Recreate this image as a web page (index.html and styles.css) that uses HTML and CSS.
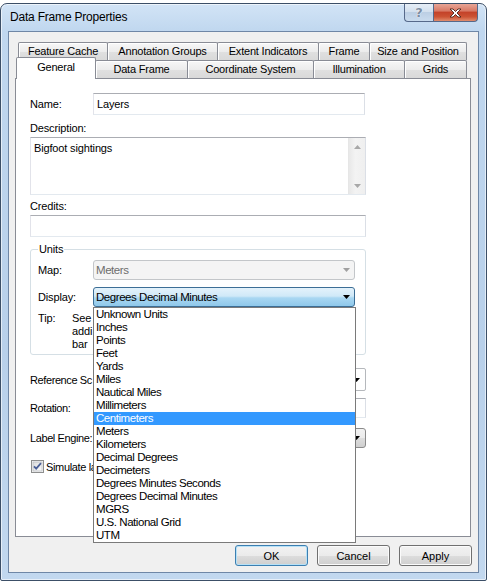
FILE: index.html
```html
<!DOCTYPE html>
<html>
<head>
<meta charset="utf-8">
<title>Data Frame Properties</title>
<link rel="stylesheet" href="styles.css">
</head>
<body>
<div class="window">
  <div class="titlebar">
    <span class="title">Data Frame Properties</span>
    <div class="caption-btns">
      <div class="cbtn help">?</div>
      <div class="cbtn close">
        <svg width="13" height="10" viewBox="0 -1 13 10"><path d="M1 0h3l2.5 2.5L9 0h3L8 4l4 4H9L6.5 5.5 4 8H1l4-4z" fill="#fff" stroke="#4a2418" stroke-width="0.9" stroke-linejoin="round"/></svg>
      </div>
    </div>
  </div>
  <div class="client">
    <div class="tabstrip">
      <div class="tabrow back">
        <div class="tab">Feature Cache</div>
        <div class="tab">Annotation Groups</div>
        <div class="tab">Extent Indicators</div>
        <div class="tab">Frame</div>
        <div class="tab">Size and Position</div>
      </div>
      <div class="tabrow front">
        <div class="tab sel">General</div>
        <div class="tab">Data Frame</div>
        <div class="tab">Coordinate System</div>
        <div class="tab">Illumination</div>
        <div class="tab">Grids</div>
      </div>
    </div>
    <div class="panel">
      <div class="form">
        <div class="row">
          <span class="lbl">Name:</span>
          <div class="textbox name-box">Layers</div>
        </div>
        <div class="plabel desc-label">Description:</div>
        <div class="textbox textarea">
          <div class="ta-text">Bigfoot sightings</div>
          <div class="vscroll">
            <div class="sbtn"><svg width="7" height="4" viewBox="0 0 7 4"><path d="M0 4L3.5 0 7 4z" fill="#a8a8a8"/></svg></div>
            <div class="sbtn"><svg width="7" height="4" viewBox="0 0 7 4"><path d="M0 0h7L3.5 4z" fill="#a8a8a8"/></svg></div>
          </div>
        </div>
        <div class="plabel credits-label">Credits:</div>
        <div class="textbox credits-box"></div>

        <fieldset class="group">
          <legend>Units</legend>
          <div class="frow">
            <span class="flbl">Map:</span>
            <div class="combo disabled">
              <span>Meters</span>
              <svg width="7" height="4" viewBox="0 0 7 4"><path d="M0 0h7L3.5 4z" fill="#a0a0a0"/></svg>
            </div>
          </div>
          <div class="frow display-row">
            <span class="flbl">Display:</span>
            <div class="combo-wrap">
              <div class="combo focused">
                <span>Degrees Decimal Minutes</span>
                <svg width="7" height="4" viewBox="0 0 7 4"><path d="M0 0h7L3.5 4z" fill="#000"/></svg>
              </div>
              <ul class="droplist">
                <li>Unknown Units</li>
                <li>Inches</li>
                <li>Points</li>
                <li>Feet</li>
                <li>Yards</li>
                <li>Miles</li>
                <li>Nautical Miles</li>
                <li>Millimeters</li>
                <li class="hl">Centimeters</li>
                <li>Meters</li>
                <li>Kilometers</li>
                <li>Decimal Degrees</li>
                <li>Decimeters</li>
                <li>Degrees Minutes Seconds</li>
                <li>Degrees Decimal Minutes</li>
                <li>MGRS</li>
                <li>U.S. National Grid</li>
                <li>UTM</li>
              </ul>
            </div>
          </div>
          <div class="tip">
            <span class="tip-lbl">Tip:</span>
            <div class="tip-text">
              <div>See</div>
              <div>addi</div>
              <div>bar</div>
            </div>
          </div>
        </fieldset>

        <div class="lrow refscale">
          <span class="tight-lbl">Reference Sc</span>
          <div class="combo plain">
            <svg width="7" height="4" viewBox="0 0 7 4"><path d="M0 0h7L3.5 4z" fill="#000"/></svg>
          </div>
        </div>
        <div class="lrow rotation">
          <span class="tight-lbl">Rotation:</span>
          <div class="textbox rot-box"></div>
        </div>
        <div class="lrow engine">
          <span class="tight-lbl">Label Engine:</span>
          <div class="combo btnlike">
            <svg width="7" height="4" viewBox="0 0 7 4"><path d="M0 0h7L3.5 4z" fill="#000"/></svg>
          </div>
        </div>
        <div class="checkrow">
          <svg class="checkbox" width="13" height="13" viewBox="0 0 13 13">
            <defs><linearGradient id="cbg" x1="0" y1="0" x2="1" y2="1"><stop offset="0" stop-color="#dcdcdc"/><stop offset="1" stop-color="#fbfbfb"/></linearGradient></defs>
            <rect x="0.5" y="0.5" width="12" height="12" fill="#f4f4f4" stroke="#8e8f8f"/>
            <rect x="2" y="2" width="9" height="9" fill="url(#cbg)" stroke="#aeb3b9" stroke-width="0.6"/>
            <path d="M3 6.3l2.2 2.4L10 3.2" fill="none" stroke="#4a5f97" stroke-width="1.8"/>
          </svg>
          <span class="check-lbl">Simulate la</span>
        </div>
      </div>
    </div>
    <div class="buttons">
      <button class="btn default">OK</button>
      <button class="btn">Cancel</button>
      <button class="btn">Apply</button>
    </div>
  </div>
</div>
<svg class="cursor" width="13" height="21" viewBox="0 0 13 21"><path d="M0.5 0.5V16.5L4.5 12.6 7.3 19.3 9.6 18.3 6.9 11.8H11.9Z" fill="#fff" stroke="#000" stroke-linejoin="round"/></svg>
</body>
</html>
```
FILE: styles.css
```css
* { box-sizing: border-box; }

body {
  margin: 0;
  background: #ffffff;
  font-family: "Liberation Sans", Arial, sans-serif;
  font-size: 11px;
  letter-spacing: -0.15px;
  color: #000;
}

.window {
  margin-top: 3px;
  width: 487px;
  height: 578px;
  border: 1px solid #3c4f67;
  border-radius: 7px 7px 2px 2px;
  background: linear-gradient(#d2e4f6, #c0d7ef 27px, #b8d0ea 60%, #c2d8ef);
  box-shadow: inset 0 0 0 1px rgba(255,255,255,0.6);
  padding: 0 7px 7px 7px;
  display: flex;
  flex-direction: column;
}

.titlebar {
  height: 27px;
  display: flex;
  justify-content: space-between;
  align-items: flex-start;
}

.title {
  font-size: 12px;
  letter-spacing: -0.2px;
  line-height: 14px;
  margin: 6px 0 0 2px;
}

.caption-btns {
  display: flex;
  margin-right: 1px;
}

.cbtn {
  height: 18px;
  border: 1px solid #56698a;
  border-top: none;
  display: flex;
  align-items: center;
  justify-content: center;
}

.help {
  width: 29px;
  border-right: none;
  border-radius: 0 0 0 4px;
  background: linear-gradient(#e6eef7, #d3e0ee 45%, #bccfe4 50%, #c9dbee);
  color: #7b8da3;
  font-family: "DejaVu Sans", sans-serif;
  font-weight: bold;
  font-size: 13px;
  text-shadow: 0 0 1px #fff, 0 0 1px #fff;
}

.close {
  width: 45px;
  border-radius: 0 0 4px 0;
  background: linear-gradient(#e8a596, #d87a66 40%, #c4432a 50%, #cc5334 75%, #e08c6d);
}

.client {
  flex: 1;
  background: #f0f0f0;
  border: 1px solid #6f87a6;
  padding: 10px 7px 0 6px;
  display: flex;
  flex-direction: column;
}

.tabstrip {
  height: 36px;
}

.tabrow {
  display: grid;
  grid-template-rows: 18px;
  height: 18px;
  align-items: end;
}

.back {
  grid-template-columns: 89px 110px 101px 51px 97px;
  margin-left: 3px;
}

.front {
  grid-template-columns: 79px 92px 126px 91px 62px;
  margin-left: 1px;
}

.tab {
  height: 18px;
  margin-right: -1px;
  border: 1px solid #898c95;
  border-bottom: none;
  border-radius: 2px 2px 0 0;
  background: linear-gradient(#f7f7f7, #ececec 50%, #e0e0e0 51%, #d9d9d9);
  box-shadow: inset 1px 1px 0 #fff;
  text-align: center;
  line-height: 17px;
  letter-spacing: -0.2px;
  white-space: nowrap;
}

.tab.sel {
  height: 22px;
  margin-bottom: -1px;
  background: #ffffff;
  box-shadow: none;
  line-height: 19px;
  position: relative;
  z-index: 2;
}

.panel {
  height: 459px;
  background: #fff;
  border: 1px solid #898c95;
  padding: 14px 0 0 14px;
}

.form {
  width: 336px;
}

.row {
  display: flex;
  align-items: center;
}

.lbl {
  width: 63px;
}

.textbox {
  height: 22px;
  background: #fff;
  border: 1px solid;
  border-color: #abadb3 #dbdfe6 #e3e9ef #e2e3ea;
  padding: 0 3px;
  line-height: 20px;
}

.name-box {
  width: 272px;
}

.plabel {
  line-height: 13px;
}

.desc-label { margin-top: 7px; }

.textarea {
  margin-top: 2px;
  height: 58px;
  display: flex;
  padding: 0;
}

.ta-text {
  flex: 1;
  padding: 4px 3px;
  line-height: 13px;
}

.vscroll {
  width: 17px;
  background: linear-gradient(to right, #e8e8e8, #f3f3f3 40%, #efefef);
  border-left: 1px solid #e6e6e6;
  display: flex;
  flex-direction: column;
  justify-content: space-between;
}

.sbtn {
  height: 17px;
  display: flex;
  align-items: center;
  justify-content: center;
}

.credits-label { margin-top: 5px; }

.credits-box { margin-top: 2px; }

.group {
  margin: 6px 0 0 0;
  padding: 4px 9px 3px 7px;
  border: 1px solid #d5dfe5;
  border-radius: 3px;
  min-inline-size: 0;
}

.group legend {
  padding: 0 1px;
  line-height: 13px;
}

.frow {
  display: flex;
  align-items: center;
  height: 20px;
}

.display-row { margin-top: 7px; }

.flbl {
  width: 55px;
}

.combo {
  height: 20px;
  width: 262px;
  border: 1px solid #acacac;
  border-radius: 3px;
  display: flex;
  align-items: center;
  justify-content: space-between;
  padding: 0 4px 0 2px;
  font-size: 11.5px;
  letter-spacing: -0.45px;
  white-space: nowrap;
  overflow: hidden;
}

.combo.disabled {
  background: #f4f4f4;
  border-color: #c3c6c9;
  color: #6d6d6d;
}

.combo-wrap {
  position: relative;
}

.combo.focused {
  border-color: #3c6e96;
  background: linear-gradient(#e4f2fb, #d0e9f8 45%, #a9d7f2 55%, #8fc8ea);
}

.droplist {
  position: absolute;
  left: 0;
  top: 100%;
  z-index: 10;
  width: 263px;
  margin: 0;
  padding: 0;
  list-style: none;
  background: #fff;
  border: 1px solid #7a7a7a;
}

.droplist li {
  height: 13px;
  line-height: 13px;
  padding-left: 2px;
  font-size: 11.5px;
  letter-spacing: -0.45px;
  white-space: nowrap;
}

.droplist li.hl {
  background: #3399ff;
  color: #fff;
}

.tip {
  margin-top: 5px;
  display: flex;
  line-height: 13px;
}

.tip-lbl {
  width: 34px;
}

.tip-text {
  width: 21px;
  white-space: nowrap;
}

.lrow {
  display: grid;
  grid-template-columns: 63px 273px;
  align-items: center;
}

.tight-lbl {
  white-space: nowrap;
  letter-spacing: -0.4px;
}

.refscale { margin-top: 13px; }
.refscale .combo { height: 23px; border-color: #b5b8bc; border-radius: 2px; }

.rotation { margin-top: 7px; }
.rot-box { height: 20px; line-height: 18px; }

.engine { margin-top: 10px; }

.combo.plain,
.combo.btnlike {
  width: 273px;
  justify-content: flex-end;
  padding-right: 5px;
}

.combo.btnlike {
  border-color: #8a8a8a;
  background: linear-gradient(#f2f2f2, #ebebeb 50%, #dddddd 51%, #cfcfcf);
}

.checkrow {
  margin-top: 12px;
  display: flex;
  align-items: center;
  height: 13px;
}

.checkbox {
  margin-left: 1px;
  margin-right: 2px;
  flex: none;
}

.check-lbl {
  white-space: nowrap;
  letter-spacing: -0.35px;
}

.buttons {
  margin-top: 8px;
  margin-right: -1px;
  display: flex;
  justify-content: flex-end;
  gap: 9px;
}

.btn {
  width: 73px;
  height: 21px;
  border: 1px solid #707070;
  border-radius: 3px;
  background: linear-gradient(#f2f2f2, #ebebeb 50%, #dddddd 51%, #cfcfcf);
  box-shadow: inset 0 0 0 1px #fbfbfb;
  font-family: "Liberation Sans", Arial, sans-serif;
  font-size: 11px;
  color: #000;
  padding: 0;
}

.btn.default {
  border-color: #3c7fb1;
  box-shadow: inset 0 0 0 1px #b6e1f7;
}

.cursor {
  position: absolute;
  left: 305px;
  top: 416px;
}
```
